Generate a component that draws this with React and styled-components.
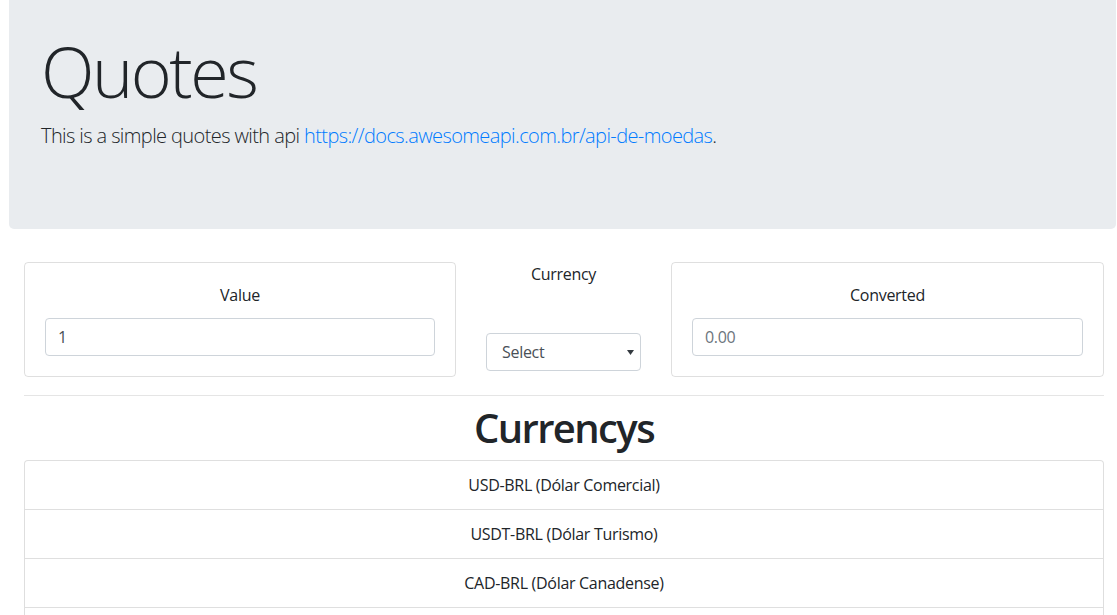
import React from "react";
import styled, { createGlobalStyle } from "styled-components";

const GlobalStyle = createGlobalStyle`
  html, body {
    margin: 0;
    padding: 0;
    overflow-x: hidden;
    background: #fff;
  }
  body {
    font-family: "Open Sans", "Noto Sans", Arial, sans-serif;
    font-size: 16px;
    line-height: 1.5;
    color: #212529;
    letter-spacing: -0.3px;
  }
  *, *::before, *::after { box-sizing: border-box; }
`;

const Page = styled.div`
  width: 1117px;
  padding-left: 9px;
`;

const Jumbotron = styled.header`
  width: 1107px;
  background: #e9ecef;
  border-radius: 0 0 5px 5px;
  padding: 29px 32px 62px;
  margin-bottom: 33px;
`;

const Display = styled.h1`
  margin: 0 0 8px;
  font-size: 70px;
  font-weight: 300;
  line-height: 1.2;
  letter-spacing: -2.5px;
  color: #212529;
`;

const Lead = styled.p`
  margin: 0 0 16px;
  font-size: 20px;
  font-weight: 300;
  line-height: 1.5;
  letter-spacing: -0.6px;
`;

const Link = styled.a`
  color: #007bff;
  text-decoration: none;
`;

const Container = styled.main`
  width: 1110px;
  padding: 0 15px;
`;

const FormRow = styled.section`
  display: grid;
  grid-template-columns: 432px 155px 433px;
  column-gap: 30px;
  align-items: start;
`;

const Card = styled.div`
  border: 1px solid rgba(0, 0, 0, 0.125);
  border-radius: 4px;
  padding: 20px;
  text-align: center;
`;

const Label = styled.label`
  display: block;
  text-align: center;
  line-height: 24px;
  margin-bottom: ${(p) => p.$gap || 11}px;
`;

const Input = styled.input`
  display: block;
  width: 100%;
  height: 38px;
  padding: 6px 12px;
  font-family: inherit;
  font-size: 16px;
  letter-spacing: -0.3px;
  line-height: 1.5;
  color: ${(p) => (p.$muted ? "#6c757d" : "#495057")};
  background: #fff;
  border: 1px solid #ced4da;
  border-radius: 4px;
  outline: none;
  &::placeholder { color: #6c757d; opacity: 1; }
`;

const CenterCol = styled.div`
  display: flex;
  flex-direction: column;
  align-items: center;
`;

const SelectWrap = styled.div`
  position: relative;
  width: 100%;
`;

const Select = styled.select`
  display: block;
  width: 100%;
  height: 38px;
  padding: 6px 28px 6px 15px;
  font-family: inherit;
  font-size: 16px;
  letter-spacing: -0.3px;
  color: #495057;
  background: #fff;
  border: 1px solid #ced4da;
  border-radius: 4px;
  appearance: none;
  -webkit-appearance: none;
  outline: none;
`;

const Caret = styled.svg`
  position: absolute;
  right: 7px;
  top: 17px;
  pointer-events: none;
`;

const Divider = styled.hr`
  margin: 18px 0 0;
  border: 0;
  border-top: 1px solid rgba(0, 0, 0, 0.1);
`;

const SectionTitle = styled.h2`
  margin: 8px 0 8px;
  font-size: 40px;
  font-weight: 600;
  line-height: 1.2;
  text-align: center;
  letter-spacing: -1.6px;
`;

const List = styled.ul`
  list-style: none;
  margin: 0;
  padding: 0;
  border: 1px solid rgba(0, 0, 0, 0.125);
  border-bottom: 0;
  border-radius: 4px 4px 0 0;
`;

const Item = styled.li`
  padding: 12px 20px;
  line-height: 24px;
  text-align: center;
  border-bottom: 1px solid rgba(0, 0, 0, 0.125);
`;

const currencies = [
  "USD-BRL (Dólar Comercial)",
  "USDT-BRL (Dólar Turismo)",
  "CAD-BRL (Dólar Canadense)",
  "EUR-BRL (Euro)",
  "GBP-BRL (Libra Esterlina)",
  "ARS-BRL (Peso Argentino)",
  "BTC-BRL (Bitcoin)",
];

export default function App() {
  return (
    <>
      <GlobalStyle />
      <Page>
        <Jumbotron>
          <Display>Quotes</Display>
          <Lead>
            This is a simple quotes with api{" "}
            <Link href="#">https://docs.awesomeapi.com.br/api-de-moedas</Link>.
          </Lead>
        </Jumbotron>
        <Container>
          <FormRow>
            <Card>
              <Label>Value</Label>
              <Input defaultValue="1" />
            </Card>
            <CenterCol>
              <Label $gap={47}>Currency</Label>
              <SelectWrap>
                <Select defaultValue="">
                  <option value="">Select</option>
                  {currencies.map((c) => (
                    <option key={c} value={c}>{c}</option>
                  ))}
                </Select>
                <Caret width="7" height="5" viewBox="0 0 7 5">
                  <path d="M0 0h7L3.5 5z" fill="#343a40" />
                </Caret>
              </SelectWrap>
            </CenterCol>
            <Card>
              <Label>Converted</Label>
              <Input $muted placeholder="0.00" readOnly />
            </Card>
          </FormRow>
          <Divider />
          <SectionTitle>Currencys</SectionTitle>
          <List>
            {currencies.map((c) => (
              <Item key={c}>{c}</Item>
            ))}
          </List>
        </Container>
      </Page>
    </>
  );
}
